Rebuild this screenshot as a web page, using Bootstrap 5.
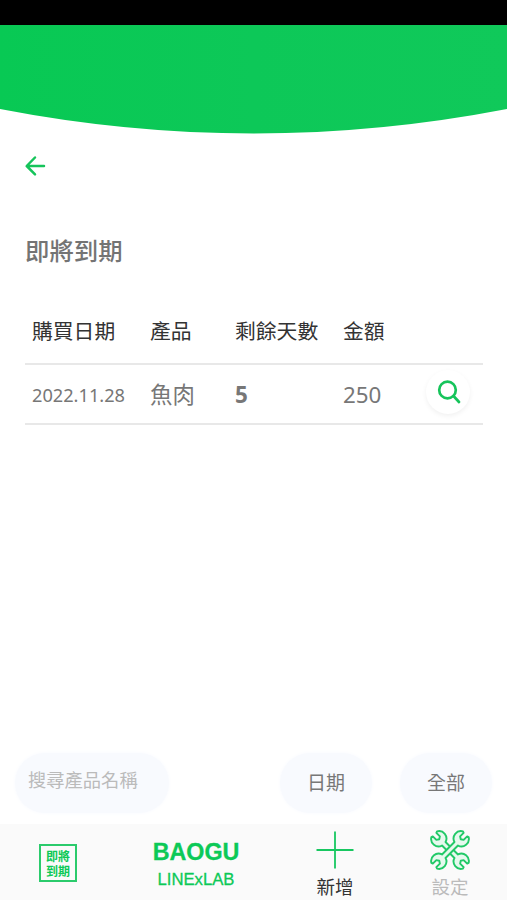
<!DOCTYPE html>
<html lang="zh-Hant">
<head>
<meta charset="utf-8">
<meta name="viewport" content="width=device-width, initial-scale=1">
<title>即將到期</title>
<link href="https://cdn.jsdelivr.net/npm/bootstrap@5.3.0/dist/css/bootstrap.min.css" rel="stylesheet">
<style>
:root{--brand:#0cc957}
body{font-family:"Noto Sans","Noto Sans CJK TC",sans-serif;color:#777;background:#fff;line-height:1}
.status-bar{height:25px;background:#000}
.hero{height:109px}
.back-link{width:22px;height:22px;margin:21px 0 0 24px}
.page-title{font-size:24.4px;font-weight:500;color:#747474;margin:55px 0 0 25px;line-height:36px;font-family:"Noto Sans CJK TC",sans-serif}
.items{margin:30px 24px 0 25px;width:458px;table-layout:fixed}
.items th{font-size:20.8px;font-weight:400;color:#333;height:66px;padding:1px 0 0;vertical-align:middle;white-space:nowrap}
.items td{height:60px;padding:3px 0 0;font-size:22.4px;color:#777;vertical-align:middle;white-space:nowrap}
.items td:last-child{padding:0 0 1px}
.items tr{border-bottom:2px solid #e8e8e8}
.items .col-date{padding-left:7px}
.items td.col-date{font-size:18.2px}
.view-btn{width:44px;height:44px;background:#fff;box-shadow:0 2px 5px rgba(0,0,0,.06);margin:-4px 0 0 2px;padding-left:2px!important}
.filters{height:66px;padding:0 15px}
.pill{background:#f8fafe;box-shadow:0 0 4px #f8fafe;color:#777;font-size:19px;border-radius:32px;height:60px;width:92px}
.pill-search{width:154px;font-size:18.3px;color:#bbb;padding:0 0 7px 13px}
.pill-search::placeholder{color:#bbb;opacity:1}
.tabs{height:76px;background:#fafafa}
.tab-link{color:var(--brand);text-decoration:none}
.due-box{width:38px;height:38px;border:2px solid #2bcb6c;font:700 12px/15px "Noto Sans CJK TC",sans-serif}
.brand-name{font:700 23.3px/26px "Liberation Sans",sans-serif;-webkit-text-stroke:.3px var(--brand)}
.brand-sub{font:400 16.7px/20px "Liberation Sans",sans-serif;-webkit-text-stroke:.3px var(--brand);margin-top:5px}
.tab-label{font-size:18.5px;line-height:24px}
.pill-all{margin-left:28px}
.tab-due{margin-left:39px;width:38px;padding-top:20px}
.tab-brand{margin-left:66px;width:106px;padding-top:15px}
.tab-add{margin-left:56px;width:60px;padding-top:7px}
.tab-settings{margin-left:55px;width:60px;padding-top:6px}
.label-add{color:#333;margin-top:6px}
.label-settings{color:#bbb;margin-top:5px}
</style>
<script src="https://cdn.jsdelivr.net/npm/bootstrap@5.3.0/dist/js/bootstrap.bundle.min.js"></script>
</head>
<body>
<div class="d-flex flex-column vh-100 overflow-hidden">
  <div class="status-bar flex-shrink-0"></div>
  <svg class="hero d-block w-100 flex-shrink-0" viewBox="0 0 507 109" preserveAspectRatio="none" aria-hidden="true">
    <defs><linearGradient id="heroFill"><stop offset="0" stop-color="#08c954"/><stop offset=".5" stop-color="#0dc858"/><stop offset="1" stop-color="#10c95a"/></linearGradient></defs>
    <path d="M0 0H507V84Q380 108.500 253.500 108.500T0 84Z" fill="url(#heroFill)"/>
  </svg>
  <main class="flex-grow-1">
    <a href="#" class="back-link d-block" aria-label="返回">
      <svg class="d-block" width="22" height="22" viewBox="0 0 22 22" fill="none" stroke="#16c45b" stroke-width="2.500" stroke-linecap="round" stroke-linejoin="round"><path d="M20 11H3M11 2.500L2.700 11L11 19.300"/></svg>
    </a>
    <h1 class="page-title">即將到期</h1>
    <table class="items">
      <colgroup><col style="width:125px"><col style="width:85px"><col style="width:108px"><col style="width:81px"><col></colgroup>
      <thead><tr><th class="col-date">購買日期</th><th>產品</th><th>剩餘天數</th><th>金額</th><th></th></tr></thead>
      <tbody><tr>
        <td class="col-date">2022.11.28</td><td>魚肉</td><td class="fw-bold">5</td><td>250</td>
        <td><button class="btn view-btn rounded-circle border-0 p-0 d-flex align-items-center justify-content-center" aria-label="查看">
          <svg width="24" height="24" viewBox="0 0 24 24" fill="none" stroke="#16c45b" stroke-width="2.700" stroke-linecap="round"><circle cx="10.500" cy="10" r="8.300"/><path d="M16.500 16L22 22"/></svg>
        </button></td>
      </tr></tbody>
    </table>
  </main>
  <div class="filters d-flex align-items-center flex-shrink-0 mb-2">
    <input type="text" class="pill pill-search border-0 me-auto" placeholder="搜尋產品名稱" aria-label="搜尋產品名稱">
    <button class="btn pill border-0 p-0">日期</button>
    <button class="btn pill pill-all border-0 p-0">全部</button>
  </div>
  <nav class="tabs d-flex flex-shrink-0">
    <a href="#" class="tab-link tab-due"><span class="due-box d-flex align-items-center justify-content-center"><span>即將<br>到期</span></span></a>
    <a href="#" class="tab-link tab-brand text-center"><div class="brand-name">BAOGU</div><div class="brand-sub">LINExLAB</div></a>
    <a href="#" class="tab-link tab-add d-flex flex-column align-items-center">
      <svg width="38" height="38" viewBox="0 0 38 38" fill="none" stroke="#18c760" stroke-width="1.800"><path d="M19 .5V37.500M.5 19H37.500"/></svg>
      <span class="tab-label label-add">新增</span>
    </a>
    <a href="#" class="tab-link tab-settings d-flex flex-column align-items-center">
      <svg width="40" height="40" viewBox="-20 -20 40 40" fill="#e6f9ee" stroke="#22c968" stroke-width="1.900" stroke-linejoin="round">
        <defs><path id="wrench" d="M-2.500-8.800A7.400 7.400 0 0 1-4-22.300L-2.500-21.800V-16.800L0-15.200L2.500-16.800V-21.800L4-22.300A7.400 7.400 0 0 1 2.500-8.800V8.800A7.400 7.400 0 0 1 4 22.300L2.500 21.800V16.800L0 15.200L-2.500 16.800V21.800L-4 22.300A7.400 7.400 0 0 1-2.500 8.800Z"/></defs>
        <use href="#wrench" transform="rotate(-45)"/><use href="#wrench" transform="rotate(45)"/>
      </svg>
      <span class="tab-label label-settings">設定</span>
    </a>
  </nav>
</div>
</body>
</html>
